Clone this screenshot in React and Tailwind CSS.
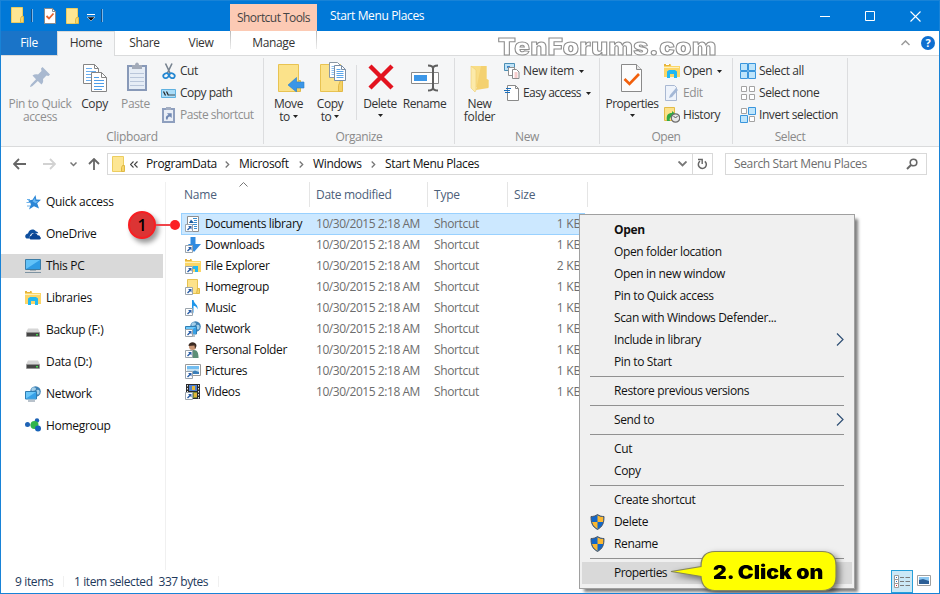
import React from 'react';

function Svg({ w = 16, h = 16, className = '', children }) {
  return (
    <svg width={w} height={h} viewBox={`0 0 ${w} ${h}`} fill="none" className={`block shrink-0 ${className}`}>
      {children}
    </svg>
  );
}

/* ---------- title bar and ribbon icons ---------- */

const FolderSmall = () => (
  <Svg w={14} h={17}>
    <path d="M.5 .5h11v15H.5z" fill="#fde693" stroke="#eccd5f" />
    <path d="M10.500 9.500h2v6h-3v-4z" fill="#f6d56b" stroke="#dfb944" />
  </Svg>
);

const CheckDoc = () => (
  <Svg w={13} h={16}>
    <path d="M.5.5h8l3 3v12H.5z" fill="#fff" stroke="#8c8c8c" />
    <path d="M8.500 .5v3h3" stroke="#8c8c8c" />
    <path d="M2.500 8l2.500 2.500 4.500-5" stroke="#e8612c" strokeWidth="1.800" />
  </Svg>
);

const PinIcon = () => (
  <Svg w={20} h={20}>
    <path d="M12.500 0L20 7.500l-1.500 1.500-2-.5-3.500 3.500c.5 2.500 0 4-1.500 5.500L7.800 14 2.500 19 .5 20 0 19.500 1 17.500l5-5.300L2.500 8.500C4 7.300 6 7 8 7.500L11.500 4 11 1.500z" fill="#a9b9d0" />
  </Svg>
);

const CopyIcon = () => (
  <Svg w={24} h={30}>
    <path d="M.5 2.500h11l4 4v15H.5z" fill="#fff" stroke="#858585" />
    <path d="M11.500 2.500v4h4" stroke="#858585" />
    <path d="M3 6.500h6M3 9.500h10M3 12.500h10M3 15.500h10M3 18.500h10" stroke="#6aaef0" />
    <path d="M8.500 10.500h10l5 5v14h-15z" fill="#fff" stroke="#858585" />
    <path d="M18.500 10.500v5h5" stroke="#858585" />
    <path d="M11 15.500h5M11 18.500h10M11 21.500h10M11 24.500h10M11 27.500h8" stroke="#4d9ee9" />
  </Svg>
);

const PasteIcon = () => (
  <Svg w={20} h={30}>
    <path d="M1 4h18v24H1z" fill="#e6edf6" stroke="#8899b8" strokeWidth="2" />
    <path d="M3 11.500h14M3 15.500h14M3 19.500h14M3 23.500h14" stroke="#b9c6da" />
    <path d="M5 3h3c0-3.500 4-3.500 4 0h3v4H5z" fill="#a3abb9" />
  </Svg>
);

const CutIcon = () => (
  <Svg>
    <path d="M4.500 0.500l5 10.500M11 0.500L6 11" stroke="#76828f" strokeWidth="1.600" />
    <ellipse cx="5" cy="12.700" rx="2.800" ry="2.300" stroke="#2387d2" strokeWidth="1.800" transform="rotate(-30 5 12.700)" />
    <ellipse cx="11" cy="12.700" rx="2.800" ry="2.300" stroke="#2387d2" strokeWidth="1.800" transform="rotate(30 11 12.700)" />
  </Svg>
);

const PathIcon = () => (
  <Svg>
    <path d="M.5 4.500h14v8H.5z" fill="#a9dcf8" stroke="#5fb1e0" />
    <path d="M2.500 6.500l2 4M5.500 6.500l2 4" stroke="#222" strokeWidth="1.200" />
    <path d="M8.500 10h1M10.500 10h1M12.500 10h1" stroke="#222" strokeWidth="1.500" />
  </Svg>
);

const PasteShortcutIcon = () => (
  <Svg>
    <path d="M2 2h11v13H2z" fill="#e9eef6" stroke="#8e9fbe" strokeWidth="2" />
    <path d="M5 0h5v3H5z" fill="#a3aec2" />
    <path d="M5 12.500c-.5-3 .5-4 2.500-4.500L6 6.300h4.700V11L9 9.500c-1.500.3-2.300 1-2.300 3z" fill="#7088b3" />
  </Svg>
);

const MoveIcon = () => (
  <Svg w={27} h={30}>
    <path d="M.5 2.500h20v27H.5z" fill="#fbe28a" stroke="#e8c352" />
    <path d="M20.500 18.500h2v11h-4v-6z" fill="#f4d164" stroke="#e2b946" />
    <path d="M10 23l8.500-7.500v4.500H26v6h-7.500v4z" fill="#3b96e6" stroke="#2a7fcb" strokeWidth=".6" />
  </Svg>
);

const CopyToIcon = () => (
  <Svg w={27} h={30}>
    <path d="M.5 2.500h20v27H.5z" fill="#fbe28a" stroke="#e8c352" />
    <path d="M20.500 18.500h2v11h-4v-6z" fill="#f4d164" stroke="#e2b946" />
    <path d="M9.500.5h8l3 3v12h-11z" fill="#fff" stroke="#8b98a5" />
    <path d="M11.500 4.500h4M11.500 6.500h7M11.500 8.500h7M11.500 10.500h7M11.500 12.500h7" stroke="#8dbfee" />
    <path d="M14.500 3.500h7l4 4v11h-11z" fill="#fff" stroke="#7b8ea5" />
    <path d="M21.500 3.500v4h4" stroke="#7b8ea5" />
    <path d="M16.500 7.500h4M16.500 9.500h7M16.500 11.500h7M16.500 13.500h7M16.500 15.500h7" stroke="#5aa5ea" />
  </Svg>
);

const DeleteIcon = () => (
  <Svg w={26} h={28}>
    <path d="M2 3l22 22M24 3L2 25" stroke="#e3131f" strokeWidth="4.400" />
  </Svg>
);

const RenameIcon = () => (
  <Svg w={28} h={30}>
    <path d="M.5 10.500h27v11H.5z" fill="#fff" stroke="#8a8a8a" />
    <path d="M3 13h13v6H3z" fill="#3c97e8" />
    <path d="M17 3.500c3 0 5 .5 5 3v19c0 2.500-2 3-5 3M27 3.500c-3 0-5 .5-5 3v19c0 2.500 2 3 5 3" stroke="#5f5f5f" strokeWidth="2" />
  </Svg>
);

const NewFolderIcon = () => (
  <Svg w={20} h={30}>
    <path d="M1 4h15.500v13l2 1v7H1z" fill="#f9dd85" />
    <path d="M11 4h5.500v13l2 1v8L6 28z" fill="#f4d170" />
    <path d="M1 4l5 4v20l-1 2-4-4z" fill="#fceaa9" stroke="#edcf73" strokeWidth=".6" />
  </Svg>
);

const NewItemIcon = () => (
  <Svg>
    <path d="M.5.500h10v7H.5z" fill="#bfe3f8" stroke="#4b8fb5" />
    <path d="M3 3h3v2H3z" fill="#3f86c9" />
    <path d="M4.500 4.500h6v8h-6z" fill="#fff" stroke="#909090" />
    <path d="M8.500 6.500h4l2.500 2.500v6.500H8.500z" fill="#fff" stroke="#8a8a8a" />
    <path d="M10.500 10h3M10.500 12h3M10.500 14h3" stroke="#ee9a9a" />
  </Svg>
);

const EasyAccessIcon = () => (
  <Svg>
    <path d="M3.500.5h8l3 3v12h-11z" fill="#fff" stroke="#8a8a8a" />
    <path d="M11.500.5v3h3" stroke="#8a8a8a" />
    <path d="M2 3.500h5M0 5.500h6M1 7.500h5" stroke="#1d6fbc" strokeWidth="1.200" />
  </Svg>
);

const PropertiesIcon = () => (
  <Svg w={22} h={30}>
    <path d="M.5 2.500h15l5 5v22H.5z" fill="#fcfcfc" stroke="#8a8a8a" />
    <path d="M15.500 2.500v5h5" fill="#e6e6e6" stroke="#8a8a8a" />
    <path d="M3.500 17l5 5L18 12" stroke="#f2600c" strokeWidth="2.600" />
  </Svg>
);

const LibraryArt = () => (
  <g>
    <path d="M0 1h6l1.500 2H16v11H0z" fill="#fbd667" />
    <path d="M0 1h6.500v2H0z" fill="#e6b43c" />
    <path d="M2 1.500h3" stroke="#fff" />
    <path d="M0 4h15v1H0z" fill="#fdf0bd" />
    <path d="M3 15V8.500L5 7h6l2 1.500V15h-3v-4H6v4z" fill="#22b8f2" />
  </g>
);

const LibraryIcon = () => <Svg><LibraryArt /></Svg>;

const EditIcon = () => (
  <Svg>
    <path d="M1.500.5h9l2 2v13h-11z" fill="#eef3fb" stroke="#a9b8d2" />
    <path d="M5 13l1-3 6-7 2 2-6 7z" fill="#a4b8d6" />
  </Svg>
);

const HistoryIcon = () => (
  <Svg>
    <path d="M.5.5h10v13H.5z" fill="#fce18a" stroke="#e3bc48" />
    <path d="M3 14c-1-6 1-8 5-8V4l4 3.500L8 11V9.500C6 10 5 12 6 14z" fill="#31a943" />
    <circle cx="11.500" cy="11" r="4.200" fill="#e8e8e8" stroke="#6d6d6d" strokeWidth="1.200" />
    <path d="M9.500 9l2 2 2-2" stroke="#555" />
  </Svg>
);

function SelectIcon({ cells }) {
  return (
    <Svg>
      {[[0, 0], [8, 0], [0, 8], [8, 8]].map(([x, y], i) => (
        cells[i]
          ? <path key={i} d={`M${x + 0.5} ${y + 0.5}h7v7h-7z`} fill="#bfe5fb" stroke="#3a96dd" />
          : <path key={i} d={`M${x + 1.5} ${y + 1.5}h5v5h-5z`} fill="#fff" stroke="#a3a3a3" />
      ))}
    </Svg>
  );
}

/* ---------- navigation and file icons ---------- */

const StarIcon = () => (
  <Svg>
    <path d="M10.500 1l.8 4.500 4.700.3-3.800 3.500L14 14.500l-5-2.300-5 3.300L6 10 3 6.500l4.500-.8z" fill="#2b86d6" />
    <path d="M10 4l.5 3 3 .2-3 2-3-2z" fill="#6cb8f3" />
    <path d="M2 5.500h3M1.500 8.500h4M2 12h3" stroke="#6bb1ea" />
  </Svg>
);

const OneDriveIcon = () => (
  <Svg>
    <path d="M1.500 12.500C-1 11 .5 7.500 3 7.500 4 3.500 8.500 2 11 5.500c1 0 2 .5 2.300 1.700L9 7C6 7 4.500 9 4.500 12.500z" fill="#0e4f9e" />
    <path d="M5.500 13.500c-2-1-1-3.800.8-3.800C7 6.500 11.500 6 12.500 9.200c2-.3 2.500 1 2.500 1.500 1.500.8 1 2.800-.5 2.800z" fill="#0a4595" />
  </Svg>
);

const PcIcon = () => (
  <Svg>
    <path d="M.5 1.500h15v10H.5z" fill="#62c2f8" stroke="#3b7ca6" />
    <path d="M1 11L15 2v9z" fill="#2f9be4" />
    <path d="M5 12h6v1H5z" fill="#a5b0b8" />
    <path d="M0 14.500h16" stroke="#7e93a2" />
  </Svg>
);

const DriveIcon = () => (
  <Svg>
    <path d="M3 6.500h10l2 4H1z" fill="#d6d6d6" />
    <path d="M1.500 10.500h13v4h-13z" fill="#454545" stroke="#8d8d8d" strokeWidth=".6" />
    <path d="M11 12.700h2" stroke="#46d34e" strokeWidth="1.500" />
  </Svg>
);

const NetworkArt = () => (
  <g>
    <circle cx="10.500" cy="5.500" r="5.300" fill="#3f82b5" />
    <path d="M7 2c2-1.500 4 0 4 1S9 5 7.500 5 6 3 7 2zM12 4c2-1 3 1 2.500 3S12 9 11.500 7.500 11 4.500 12 4z" fill="#a5cfe8" />
    <path d="M.5 5.500h11v7.500H.5z" fill="#6cc8fa" stroke="#2f7db2" />
    <path d="M1 12.500L11 6v6.500z" fill="#37a1e8" />
    <path d="M3 15h7" stroke="#8a9aa8" strokeWidth="1.200" />
  </g>
);

const NetworkIcon = () => <Svg><NetworkArt /></Svg>;

const HomegroupIcon = () => (
  <Svg>
    <path d="M2.500 7H9l3-4M9 7l4 4" stroke="#8cb8d8" />
    <circle cx="2.500" cy="6.500" r="2.500" fill="#1e63b5" />
    <circle cx="12" cy="2.500" r="2.200" fill="#1e63b5" />
    <circle cx="9.500" cy="7" r="4" fill="#31b54a" />
    <circle cx="13" cy="10.500" r="3" fill="#1762b8" />
  </Svg>
);

const fileArt = {
  documents: (
    <g>
      <path d="M2.500.5h11v15h-11z" fill="#fff" stroke="#8f8f8f" />
      <path d="M8 2.500h4M9 4.500h3M9 6.500h3M5 8.500h7M9 10.500h3M9 12.500h3" stroke="#3a8dd0" />
      <path d="M4 7l2-3.500L9 7z" fill="#1b5c9e" />
    </g>
  ),
  downloads: <path d="M5.500 0h5v7H16L9 15 3 7h2.500z" fill="#318be0" />,
  explorer: (
    <g>
      <path d="M0 1h6l1.500 2H16v11H0z" fill="#fbd667" />
      <path d="M0 1h6.500v2H0z" fill="#e6b43c" />
      <path d="M2 1.500h3" stroke="#fff" />
      <path d="M0 4h15v1H0z" fill="#fdf0bd" />
      <path d="M8 8h5v6h-3v-3H8z" fill="#22b8f2" />
    </g>
  ),
  folder: (
    <g>
      <path d="M2.500.5h10v14h-10z" fill="#fde28a" stroke="#e6c252" />
      <path d="M12.500 9.500h2v5h-3z" fill="#f6d56b" stroke="#dfb944" />
    </g>
  ),
  music: <path d="M7 0h1.500c.5 4 5 4.500 4 9.500C12 7 10 6 8.500 5.800V12c0 3-5 4-5.500 1.500S5 9.500 7 10.300z" fill="#1e96ea" />,
  network: <NetworkArt />,
  person: (
    <g>
      <path d="M5 15c0-5 1-7 4-7 3.500 0 4.500 3 4.500 8H5z" fill="#5d8f78" />
      <circle cx="7.500" cy="4.500" r="3.500" fill="#c99574" />
      <path d="M3.500 4c0-5 8-5 8 0L10 7 9.500 3.500z" fill="#3c2b23" />
    </g>
  ),
  pictures: (
    <g>
      <path d="M.5 1.500h15v11H.5z" fill="#fff" stroke="#9a9a9a" />
      <path d="M2 3h12v4H2z" fill="#73bdf0" />
      <path d="M2 6h12v5H2z" fill="#c5e0f0" />
      <path d="M6 9l4-1.500L14 9v2H6z" fill="#3b7fb8" />
    </g>
  ),
  videos: (
    <g>
      <path d="M1 0h14v15H1z" fill="#2b2b2b" />
      <path d="M4 1h8v6H4z" fill="#4b7fd0" />
      <path d="M4 8h8v6H4z" fill="#7d8c35" />
      <path d="M7 2h3v4H7zM9 9h3v4H9z" fill="#e2b53a" />
      <path d="M2.500 1v14M13.500 1v14" stroke="#e6e6e6" strokeDasharray="1.500 1.500" />
    </g>
  ),
};

function FileIcon({ kind }) {
  return (
    <Svg>
      {fileArt[kind]}
      <path d="M.5 8.500h7v7h-7z" fill="#fff" stroke="#9aa4ad" />
      <path d="M3 10h3.500v3.500L5.300 12.300 3 14.500 2 13.500l2.300-2.200z" fill="#2a5ea8" />
    </Svg>
  );
}

const Shield = () => (
  <Svg>
    <path d="M7.500 .5c2 1.500 4 2 6.500 2 0 6-1 10-6.500 13C2 12.500 1 8.500 1 2.500c2.500 0 4.500-.5 6.500-2z" fill="#1367c8" />
    <path d="M7.500 1.200c1.800 1.200 3.500 1.700 6 1.800 0 2-.1 3.600-.5 5H7.500zM7.500 8v7C4.500 13.200 2.500 11 2 8z" fill="#fcb82f" />
    <path d="M7.500 .5c2 1.500 4 2 6.500 2 0 6-1 10-6.500 13C2 12.500 1 8.500 1 2.500c2.500 0 4.500-.5 6.500-2z" stroke="#4d5560" />
  </Svg>
);

const Caret = ({ className = '' }) => (
  <Svg w={5} h={3} className={className}><path d="M0 0h5L2.500 3z" fill="#222" /></Svg>
);

/* ---------- ribbon ---------- */

function BigButton({ icon, lines, caret, disabled, className }) {
  return (
    <div className={`flex shrink-0 flex-col items-center whitespace-nowrap leading-[13px] ${disabled ? 'text-[#8f8f8f]' : 'text-[#333]'} ${className}`}>
      <div className="mb-[3px] flex h-[34px] items-center">{icon}</div>
      <div>{lines[0]}</div>
      {lines[1] && (
        <div className="flex items-center gap-[3px]">
          {lines[1]}
          {caret && <Caret />}
        </div>
      )}
      {!lines[1] && caret && <Caret className="mt-[4px]" />}
    </div>
  );
}

function SmallButton({ icon, label, caret, disabled }) {
  return (
    <div className={`flex h-[22px] items-center gap-[3px] whitespace-nowrap ${disabled ? 'text-[#8f8f8f]' : 'text-[#333]'}`}>
      {icon}
      <span className="-mt-px">{label}</span>
      {caret && <Caret className="ml-[2px]" />}
    </div>
  );
}

function Group({ label, className, children }) {
  return (
    <div className={`flex h-[86px] shrink-0 flex-col border-r border-[#dcdddf] ${className}`}>
      <div className="flex h-[71px] shrink-0 pt-[2px]">{children}</div>
      <div className="text-center leading-[15px] text-[#8a8a8a]">{label}</div>
    </div>
  );
}

function Ribbon() {
  return (
    <div className="flex h-[92px] border-y border-[#dadbdc] bg-[#f5f6f7] pt-[2px] tracking-[-0.42px]">
      <Group label="Clipboard" className="w-[263px] tracking-[-0.35px]">
        <BigButton className="w-[78px]" icon={<PinIcon />} lines={['Pin to Quick', 'access']} disabled />
        <BigButton className="w-[31px]" icon={<CopyIcon />} lines={['Copy']} />
        <BigButton className="w-[51px]" icon={<div className="pl-[2px]"><PasteIcon /></div>} lines={['Paste']} disabled />
        <div className="tracking-[-0.5px]">
          <SmallButton icon={<CutIcon />} label="Cut" />
          <SmallButton icon={<PathIcon />} label="Copy path" />
          <SmallButton icon={<PasteShortcutIcon />} label="Paste shortcut" disabled />
        </div>
      </Group>
      <Group label="Organize" className="w-[191px]">
        <BigButton className="w-[49px]" icon={<div className="pl-[6px]"><MoveIcon /></div>} lines={['Move', 'to']} caret />
        <BigButton className="w-[34px]" icon={<div className="pl-[6px]"><CopyToIcon /></div>} lines={['Copy', 'to']} caret />
        <div className="ml-[9px] mt-[5px] h-[55px] w-px shrink-0 bg-[#dcdddf]" />
        <BigButton className="w-[46px]" icon={<div className="pl-[2px]"><DeleteIcon /></div>} lines={['Delete']} caret />
        <BigButton className="w-[43px]" icon={<RenameIcon />} lines={['Rename']} />
      </Group>
      <Group label="New" className="w-[145px] tracking-[-0.3px]">
        <BigButton className="w-[49px]" icon={<NewFolderIcon />} lines={['New', 'folder']} />
        <div>
          <SmallButton icon={<NewItemIcon />} label="New item" caret />
          <div className="tracking-[-0.6px]">
            <SmallButton icon={<EasyAccessIcon />} label="Easy access" caret />
          </div>
        </div>
      </Group>
      <Group label="Open" className="w-[133px]">
        <BigButton className="w-[64px] tracking-[-0.5px]" icon={<PropertiesIcon />} lines={['Properties']} caret />
        <div>
          <SmallButton icon={<LibraryIcon />} label="Open" caret />
          <SmallButton icon={<EditIcon />} label="Edit" disabled />
          <SmallButton icon={<HistoryIcon />} label="History" />
        </div>
      </Group>
      <Group label="Select" className="w-[115px]">
        <div className="pl-[7px]">
          <SmallButton icon={<SelectIcon cells={[1, 1, 1, 1]} />} label="Select all" />
          <SmallButton icon={<SelectIcon cells={[0, 0, 0, 0]} />} label="Select none" />
          <SmallButton icon={<SelectIcon cells={[0, 1, 1, 0]} />} label="Invert selection" />
        </div>
      </Group>
    </div>
  );
}

function TitleBar() {
  return (
    <div className="flex h-[30px] bg-[#0078d7]">
      <div className="flex w-[229px] items-start pl-[10px] pt-[6px]">
        <FolderSmall />
        <div className="ml-[6px] mt-[2px] h-[13px] w-[2px] border-r border-[#7db5e4] bg-[#12508a]" />
        <div className="ml-[11px] mt-[1px]"><CheckDoc /></div>
        <div className="ml-[9px] mt-px"><FolderSmall /></div>
        <Svg w={8} h={8} className="ml-[7px] mt-[7px]">
          <path d="M0 .5h8" stroke="#fff" />
          <path d="M0 3h8L4 7z" fill="#111" stroke="#fff" strokeWidth=".5" />
        </Svg>
        <div className="ml-[6px] mt-[2px] h-[13px] w-[2px] border-r border-[#7db5e4] bg-[#12508a]" />
      </div>
      <div className="mt-[3px] w-[87px] bg-[#fccab4] text-center leading-[28px] tracking-[-0.55px] text-[#444]">Shortcut Tools</div>
      <div className="pl-[13px] leading-[30px] text-white">Start Menu Places</div>
      <div className="ml-auto flex items-center pr-[18px]">
        <Svg w={11} h={11} className="mr-[34px]"><path d="M0 5.500h10" stroke="#fff" /></Svg>
        <Svg w={10} h={10} className="mr-[35px]"><path d="M.5.5h9v9h-9z" stroke="#fff" /></Svg>
        <Svg w={11} h={11}><path d="M.5.5l10 10M10.500.5l-10 10" stroke="#fff" strokeWidth="1.100" /></Svg>
      </div>
    </div>
  );
}

function Tabs() {
  return (
    <div className="flex h-[24px] bg-white leading-[24px] text-[#333]">
      <div className="w-[56px] bg-[#1a74c8] text-center text-white">File</div>
      <div className="z-10 -mb-px w-[58px] border-x border-t border-[#dadbdc] bg-[#f5f6f7] text-center leading-[22px]">Home</div>
      <div className="w-[59px] text-center">Share</div>
      <div className="w-[54px] text-center">View</div>
      <div className="ml-[2px] flex w-[87px]">
        <div className="h-[18px] w-px bg-gradient-to-b from-[#b9b9b9] to-[#eee]" />
        <div className="flex-1 text-center">Manage</div>
        <div className="h-[18px] w-px bg-gradient-to-b from-[#b9b9b9] to-[#eee]" />
      </div>
      <div className="ml-auto flex items-center gap-[11px] pr-[4px]">
        <Svg w={9} h={6}><path d="M.5 5L4.500 1l4 4" stroke="#9a9a9a" strokeWidth="1.500" /></Svg>
        <div className="h-[14px] w-[14px] rounded-full bg-[#0f6fd0] text-center text-[11px] font-bold leading-[14px] text-white">?</div>
      </div>
    </div>
  );
}

const Crumb = ({ className }) => (
  <Svg w={5} h={7} className={className}><path d="M.7.5l3 3-3 3" stroke="#777" strokeWidth="1.300" /></Svg>
);

function AddressBar() {
  return (
    <div className="flex h-[35px] items-start pl-[13px] pt-[6px]">
      <div className="-ml-px flex h-[22px] w-[94px] items-center">
        <Svg w={13} h={12}><path d="M1 6h12M6 1L1 6l5 5" stroke="#666" strokeWidth="1.800" /></Svg>
        <Svg w={13} h={12} className="ml-[17px]"><path d="M0 6h12M7 1l5 5-5 5" stroke="#d2d2d2" strokeWidth="1.800" /></Svg>
        <Svg w={7} h={5} className="ml-[14px]"><path d="M.5.5l3 3 3-3" stroke="#777" strokeWidth="1.500" /></Svg>
        <Svg w={12} h={12} className="ml-[11px]"><path d="M6 12V1M1 6l5-5 5 5" stroke="#666" strokeWidth="1.800" /></Svg>
      </div>
      <div className="flex h-[22px] w-[606px] items-center border border-[#d9d9d9] pl-[4px] leading-[18px]">
        <FolderSmall />
        <Svg w={8} h={7} className="ml-[4px]"><path d="M3.500.5l-3 3 3 3M7.500.5l-3 3 3 3" stroke="#444" strokeWidth="1.100" /></Svg>
        <span className="-mt-px ml-[8px] w-[71px]">ProgramData</span>
        <Crumb className="ml-[8px]" />
        <span className="-mt-px ml-[9px] w-[52px]">Microsoft</span>
        <Crumb className="ml-[8px]" />
        <span className="-mt-px ml-[9px] w-[50px]">Windows</span>
        <Crumb className="ml-[8px]" />
        <span className="-mt-px ml-[9px]">Start Menu Places</span>
        <Svg w={9} h={6} className="ml-auto mr-[5px]"><path d="M.5.5l4 4 4-4" stroke="#777" strokeWidth="1.900" /></Svg>
        <div className="flex h-full w-[20px] items-center justify-center border-l border-[#d9d9d9]">
          <Svg w={11} h={12}>
            <path d="M3 3.200a4 4 0 1 0 4.800.1" stroke="#666" strokeWidth="1.500" />
            <path d="M1 1.500h4.200V6" stroke="#666" strokeWidth="1.400" />
          </Svg>
        </div>
      </div>
      <div className="ml-[12px] flex h-[22px] w-[202px] items-center justify-between border border-[#d9d9d9] pl-[8px] pr-[8px] text-[#6d6d6d]">
        Search Start Menu Places
        <Svg w={12} h={12}>
          <circle cx="7.500" cy="4.500" r="3.300" stroke="#666" strokeWidth="1.600" />
          <path d="M5 7L1 11" stroke="#666" strokeWidth="2" />
        </Svg>
      </div>
    </div>
  );
}

/* ---------- body ---------- */

const places = [
  { name: 'Quick access', icon: <StarIcon /> },
  { name: 'OneDrive', icon: <OneDriveIcon /> },
  { name: 'This PC', icon: <PcIcon />, active: true },
  { name: 'Libraries', icon: <LibraryIcon /> },
  { name: 'Backup (F:)', icon: <DriveIcon /> },
  { name: 'Data (D:)', icon: <DriveIcon /> },
  { name: 'Network', icon: <NetworkIcon /> },
  { name: 'Homegroup', icon: <HomegroupIcon /> },
];

const files = [
  { name: 'Documents library', kind: 'documents', size: '1 KB' },
  { name: 'Downloads', kind: 'downloads', size: '1 KB' },
  { name: 'File Explorer', kind: 'explorer', size: '2 KB' },
  { name: 'Homegroup', kind: 'folder', size: '1 KB' },
  { name: 'Music', kind: 'music', size: '1 KB' },
  { name: 'Network', kind: 'network', size: '1 KB' },
  { name: 'Personal Folder', kind: 'person', size: '1 KB' },
  { name: 'Pictures', kind: 'pictures', size: '1 KB' },
  { name: 'Videos', kind: 'videos', size: '1 KB' },
];

function NavTree() {
  return (
    <div className="flex w-[165px] flex-col gap-[8px] border-r border-[#f0f0f0] pt-[8px] tracking-[-0.3px]">
      {places.map((p) => (
        <div key={p.name} className={`flex h-[24px] w-[162px] items-center gap-[5px] pl-[24px] ${p.active ? 'bg-[#d9d9d9]' : ''}`}>
          {p.icon}
          <span>{p.name}</span>
        </div>
      ))}
    </div>
  );
}

function FileList() {
  return (
    <div className="pl-[15px]">
      <div className="relative mb-[6px] flex h-[25px] leading-[26px] tracking-[-0.2px] text-[#4c607a]">
        <div className="w-[129px] border-r border-[#e5e5e5] pl-[3px]">Name</div>
        <div className="w-[118px] border-r border-[#e5e5e5] pl-[6px] tracking-[-0.3px]">Date modified</div>
        <div className="w-[80px] border-r border-[#e5e5e5] pl-[6px]">Type</div>
        <div className="w-[80px] border-r border-[#e5e5e5] pl-[6px]">Size</div>
        <Svg w={9} h={5} className="absolute left-[58px] top-0"><path d="M.5 4.500l4-4 4 4" stroke="#777" /></Svg>
      </div>
      {files.map((f, i) => (
        <div
          key={f.name}
          className={`flex w-[404px] items-center border ${i === 0 ? 'h-[22px] -mb-px border-[#99d1ff] bg-[#cce8ff]' : 'h-[21px] border-transparent'}`}
        >
          <div className="flex w-[131px] items-center gap-[4px] pl-[3px]">
            <FileIcon kind={f.kind} />
            <span>{f.name}</span>
          </div>
          <div className="w-[118px] pl-[3px] tracking-[-0.45px] text-[#6d6d6d]">10/30/2015 2:18 AM</div>
          <div className="w-[80px] pl-[3px] text-[#6d6d6d]">Shortcut</div>
          <div className="w-[70px] text-right tracking-[-0.2px] text-[#6d6d6d]">{f.size}</div>
        </div>
      ))}
    </div>
  );
}

const menu = [
  { label: 'Open', bold: true },
  { label: 'Open folder location' },
  { label: 'Open in new window' },
  { label: 'Pin to Quick access' },
  { label: 'Scan with Windows Defender...' },
  { label: 'Include in library', sub: true },
  { label: 'Pin to Start' },
  null,
  { label: 'Restore previous versions' },
  null,
  { label: 'Send to', sub: true },
  null,
  { label: 'Cut' },
  { label: 'Copy' },
  null,
  { label: 'Create shortcut' },
  { label: 'Delete', shield: true },
  { label: 'Rename', shield: true },
  null,
  { label: 'Properties', hover: true },
];

function ContextMenu() {
  return (
    <div className="absolute left-[578px] top-[213px] w-[276px] border border-[#a0a0a0] bg-[#f0f0f0] px-[2px] py-[4px] shadow-[4px_4px_3px_-1px_rgba(0,0,0,0.5)]">
      {menu.map((m, i) => (
        m ? (
          <div key={i} className={`flex h-[22px] items-center pr-[8px] ${m.hover ? 'bg-[#d9d9d9] tracking-[-0.5px]' : ''}`}>
            <div className="w-[32px] pl-[8px]">{m.shield && <Shield />}</div>
            <span className={m.bold ? 'font-bold' : ''}>{m.label}</span>
            {m.sub && <Svg w={8} h={13} className="-mt-px ml-auto"><path d="M1 .5l6 6-6 6" stroke="#2f4f74" strokeWidth="1.200" /></Svg>}
          </div>
        ) : (
          <div key={i} className="mx-[8px] h-[7px] pt-[3px]"><div className="h-px bg-[#919191]" /></div>
        )
      ))}
    </div>
  );
}

function StatusBar() {
  return (
    <div className="flex h-[23px] items-center text-[#1e395b]">
      <span className="w-[62px] pl-[14px]">9 items</span>
      <div className="h-[11px] w-px bg-[#f0f0f0]" />
      <span className="pl-[10px] tracking-[-0.4px]">1 item selected</span>
      <span className="pl-[6px] tracking-[-0.5px]">337 bytes</span>
      <div className="ml-[10px] h-[11px] w-px bg-[#f0f0f0]" />
      <div className="ml-auto flex items-center gap-[4px] pr-[8px]">
        <div className="flex h-[23px] w-[22px] items-center justify-center border border-[#26a0da] bg-[#cbe8f6]">
          <Svg w={16} h={13}>
            <path d="M.5.5h4v4h-4zM.5 4.500h4v4h-4zM.5 8.500h4v4h-4z" fill="#fff" stroke="#9a9a9a" />
            <path d="M6 2.500h4M11.500 2.500H16M6 6.500h4M11.500 6.500H16M6 10.500h4M11.500 10.500H16" stroke="#7b7b7b" />
            <path d="M2 2h1v1H2zM2 6h1v1H2z" fill="#2a73c0" />
            <path d="M2 10h1v1H2z" fill="#e02020" />
          </Svg>
        </div>
        <Svg w={14} h={11} className="-mt-[2px]">
          <path d="M.5.5h13v10H.5z" fill="#fff" stroke="#a0a0a0" />
          <path d="M2 2h10v4H2z" fill="#8cc8f2" />
          <path d="M2 5l4-1 6 2v3H2z" fill="#2d5f96" />
        </Svg>
      </div>
    </div>
  );
}

/* ---------- annotations ---------- */

function Marker() {
  return (
    <div className="absolute left-[127px] top-[210px] flex items-center">
      <div className="h-[28px] w-[28px] rounded-full border-[2px] border-[#f81e22] bg-[#dc3434] text-center text-[16px] font-semibold leading-[24px] text-black shadow-[3px_4px_5px_rgba(0,0,0,0.4)]">1</div>
      <div className="h-[2px] w-[14px] bg-[#f0444a]" />
      <div className="h-[10px] w-[10px] rounded-full bg-[#fb2024]" />
    </div>
  );
}

function Callout() {
  return (
    <div className="absolute left-[669px] top-[549px] h-[42px] w-[168px] drop-shadow-[3px_3px_3px_rgba(0,0,0,0.5)]">
      <svg width="168" height="42" viewBox="0 0 168 42" className="absolute inset-0">
        <path
          d="M45 1.500h107q14 0 14 14v11q0 14-14 14H45q-13 0-14-14L1 21.500l30-5q0-15 14-15z"
          fill="#ffff00"
          stroke="#85855c"
          strokeWidth="1.200"
        />
      </svg>
      <div className="relative ml-[43px] w-max origin-left scale-x-[1.12] whitespace-nowrap font-['Inter'] text-[19px] font-black leading-[46px] tracking-[0px] text-black">2. Click on</div>
    </div>
  );
}

export default function App() {
  return (
    <div className="relative flex h-[594px] w-[940px] flex-col overflow-hidden border border-[#1883d7] bg-white font-['Open_Sans','Noto_Sans',sans-serif] text-[12px] leading-[16px] tracking-[-0.36px] text-[#111]">
      <TitleBar />
      <Tabs />
      <Ribbon />
      <AddressBar />
      <div className="flex h-[388px]">
        <NavTree />
        <FileList />
      </div>
      <StatusBar />
      <div className="absolute left-[497px] top-[32px] origin-left scale-x-[1.12] font-['Inter'] text-[23px] font-black leading-[28px] tracking-[0.5px] text-white [-webkit-text-stroke:1px_#909090]">TenForums.com</div>
      <ContextMenu />
      <Marker />
      <Callout />
    </div>
  );
}
